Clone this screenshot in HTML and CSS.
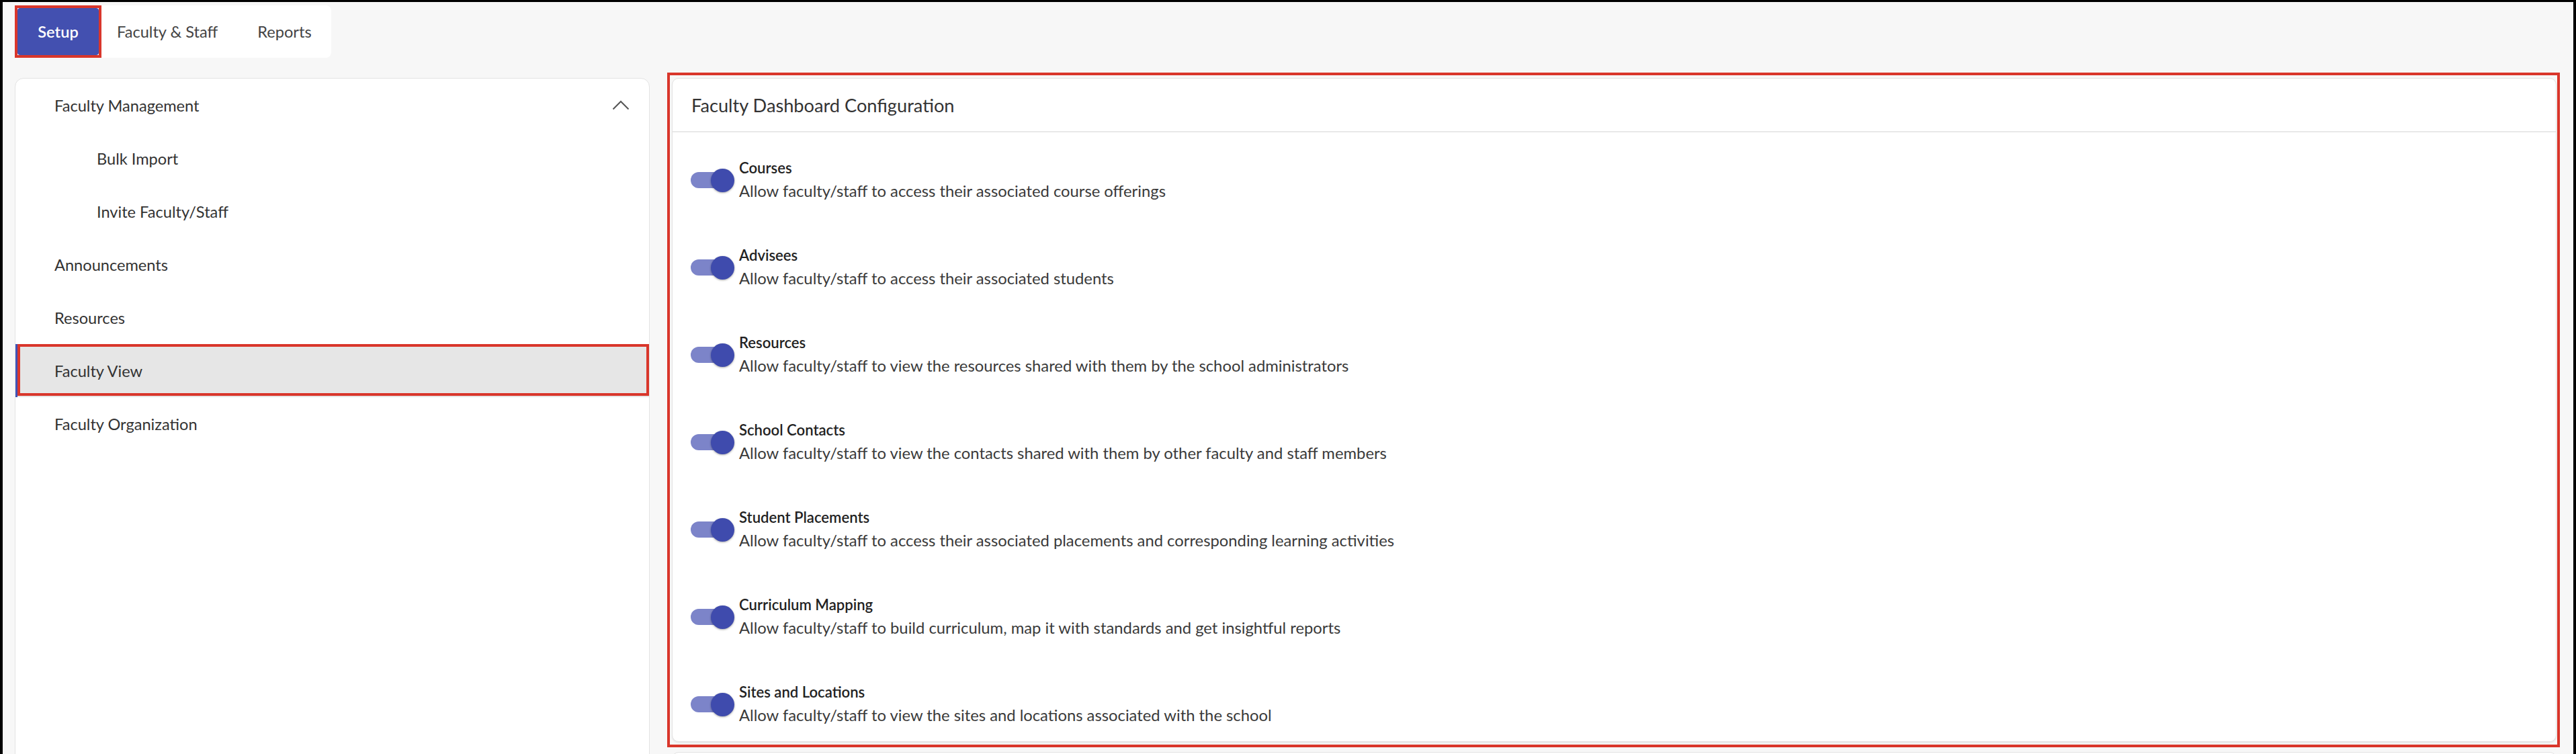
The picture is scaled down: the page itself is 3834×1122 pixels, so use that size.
FILE: index.html
```html
<!DOCTYPE html>
<html lang="en">
<head>
<meta charset="utf-8">
<title>Faculty View</title>
<link rel="stylesheet" href="styles.css">
</head>
<body>
<div class="page">
  <nav class="tabbar">
    <div class="tab-hl"><span class="tab tab-active">Setup</span></div>
    <span class="tab tab-first">Faculty &amp; Staff</span>
    <span class="tab">Reports</span>
  </nav>
  <div class="main">
    <aside class="side">
      <div class="nav-item">
        <span>Faculty Management</span>
        <svg class="chev" width="26" height="15" viewBox="0 0 26 15"><polyline points="1.5,13.5 13,2 24.5,13.5" fill="none" stroke="#555" stroke-width="2"/></svg>
      </div>
      <div class="nav-item nav-sub">Bulk Import</div>
      <div class="nav-item nav-sub">Invite Faculty/Staff</div>
      <div class="nav-item">Announcements</div>
      <div class="nav-item">Resources</div>
      <div class="nav-item nav-active">Faculty View</div>
      <div class="nav-item">Faculty Organization</div>
    </aside>
    <section class="content">
      <div class="annot">
        <div class="card">
          <div class="card-head">Faculty Dashboard Configuration</div>
          <div class="card-body">
            <div class="opt">
              <span class="switch"><span class="knob"></span></span>
              <div class="opt-text"><div class="opt-title">Courses</div><div class="opt-desc">Allow faculty/staff to access their associated course offerings</div></div>
            </div>
            <div class="opt">
              <span class="switch"><span class="knob"></span></span>
              <div class="opt-text"><div class="opt-title">Advisees</div><div class="opt-desc">Allow faculty/staff to access their associated students</div></div>
            </div>
            <div class="opt">
              <span class="switch"><span class="knob"></span></span>
              <div class="opt-text"><div class="opt-title">Resources</div><div class="opt-desc">Allow faculty/staff to view the resources shared with them by the school administrators</div></div>
            </div>
            <div class="opt">
              <span class="switch"><span class="knob"></span></span>
              <div class="opt-text"><div class="opt-title">School Contacts</div><div class="opt-desc">Allow faculty/staff to view the contacts shared with them by other faculty and staff members</div></div>
            </div>
            <div class="opt">
              <span class="switch"><span class="knob"></span></span>
              <div class="opt-text"><div class="opt-title">Student Placements</div><div class="opt-desc">Allow faculty/staff to access their associated placements and corresponding learning activities</div></div>
            </div>
            <div class="opt">
              <span class="switch"><span class="knob"></span></span>
              <div class="opt-text"><div class="opt-title">Curriculum Mapping</div><div class="opt-desc">Allow faculty/staff to build curriculum, map it with standards and get insightful reports</div></div>
            </div>
            <div class="opt">
              <span class="switch"><span class="knob"></span></span>
              <div class="opt-text"><div class="opt-title">Sites and Locations</div><div class="opt-desc">Allow faculty/staff to view the sites and locations associated with the school</div></div>
            </div>
          </div>
        </div>
      </div>
      <div class="next-card"></div>
    </section>
  </div>
</div>
</body>
</html>
```

FILE: styles.css
```css
html {
  background: #000;
}

body {
  margin: 3px 4px 0 4px;
  background: #f7f7f7;
  height: 1119px;
  overflow: hidden;
  font-family: Lato, "Liberation Sans", sans-serif;
  color: #333;
}

.page {
  padding: 5px 20px 0 18px;
}

.tabbar {
  display: inline-flex;
  align-items: stretch;
  height: 78px;
  background: #fff;
  border-radius: 8px;
  box-sizing: border-box;
}

.tab-hl {
  display: flex;
  border: 4px solid #d9362b;
}

.tab {
  display: flex;
  align-items: center;
  padding: 0 29.5px;
  font-size: 23.6px;
  color: #444;
}

.tab-first {
  padding-left: 23px;
}

.tab-active {
  width: 121px;
  padding: 0;
  justify-content: center;
  background: #4350b0;
  color: #fff;
  font-weight: 600;
  border-radius: 4px;
}

.main {
  display: flex;
  align-items: flex-start;
  gap: 26px;
  margin-top: 22px;
}

.side {
  flex: none;
  width: 945px;
  height: 1100px;
  margin-top: 8px;
  box-sizing: border-box;
  background: #fff;
  border: 1px solid #e3e3e3;
  border-radius: 13px;
}

.nav-item {
  position: relative;
  display: flex;
  align-items: center;
  justify-content: space-between;
  height: 79px;
  padding: 0 29px 0 58px;
  font-size: 23.6px;
  color: #333;
}

.nav-sub {
  padding-left: 121px;
}

.nav-active {
  background: #e6e6e6;
  border-left: 3px solid #3f51b5;
  padding-left: 55px;
}

.nav-active::after {
  content: "";
  position: absolute;
  top: 0;
  left: 0;
  right: 0;
  bottom: 2px;
  border: 4px solid #d9362b;
}

.chev {
  display: block;
}

.content {
  flex: 1;
  display: flex;
  flex-direction: column;
}

.annot {
  border: 4px solid #d9362b;
  padding: 4px 1px 4px 3px;
}

.card {
  background: #fff;
  border: 1px solid #e2e2e2;
  border-radius: 10px;
  box-shadow: 0 2px 2px rgba(0, 0, 0, 0.06);
}

.card-head {
  display: flex;
  align-items: center;
  height: 78px;
  padding-left: 28px;
  font-size: 27.2px;
  color: #333;
  border-bottom: 2px solid #e8e8e8;
}

.card-body {
  display: flex;
  flex-direction: column;
  gap: 62px;
  padding: 37px 28px 21px 27px;
}

.opt {
  display: flex;
  align-items: center;
  gap: 8px;
}

.switch {
  flex: none;
  display: flex;
  align-items: center;
  justify-content: flex-end;
  width: 64px;
  height: 24px;
  border-radius: 12px;
  background: #7c84c9;
}

.knob {
  flex: none;
  width: 35px;
  height: 35px;
  margin-right: -1px;
  border-radius: 50%;
  background: #3f4bad;
  box-shadow: 0 1px 3px rgba(0, 0, 0, 0.35);
}

.opt-title {
  font-size: 22.1px;
  font-weight: 600;
  line-height: 32px;
  color: #222;
}

.opt-desc {
  font-size: 23.8px;
  line-height: 36px;
  color: #3a3a3a;
}

.next-card {
  height: 100px;
  margin: 7px 5px 0 7px;
  background: #fff;
  border: 1px solid #e2e2e2;
  border-radius: 10px;
}
```
